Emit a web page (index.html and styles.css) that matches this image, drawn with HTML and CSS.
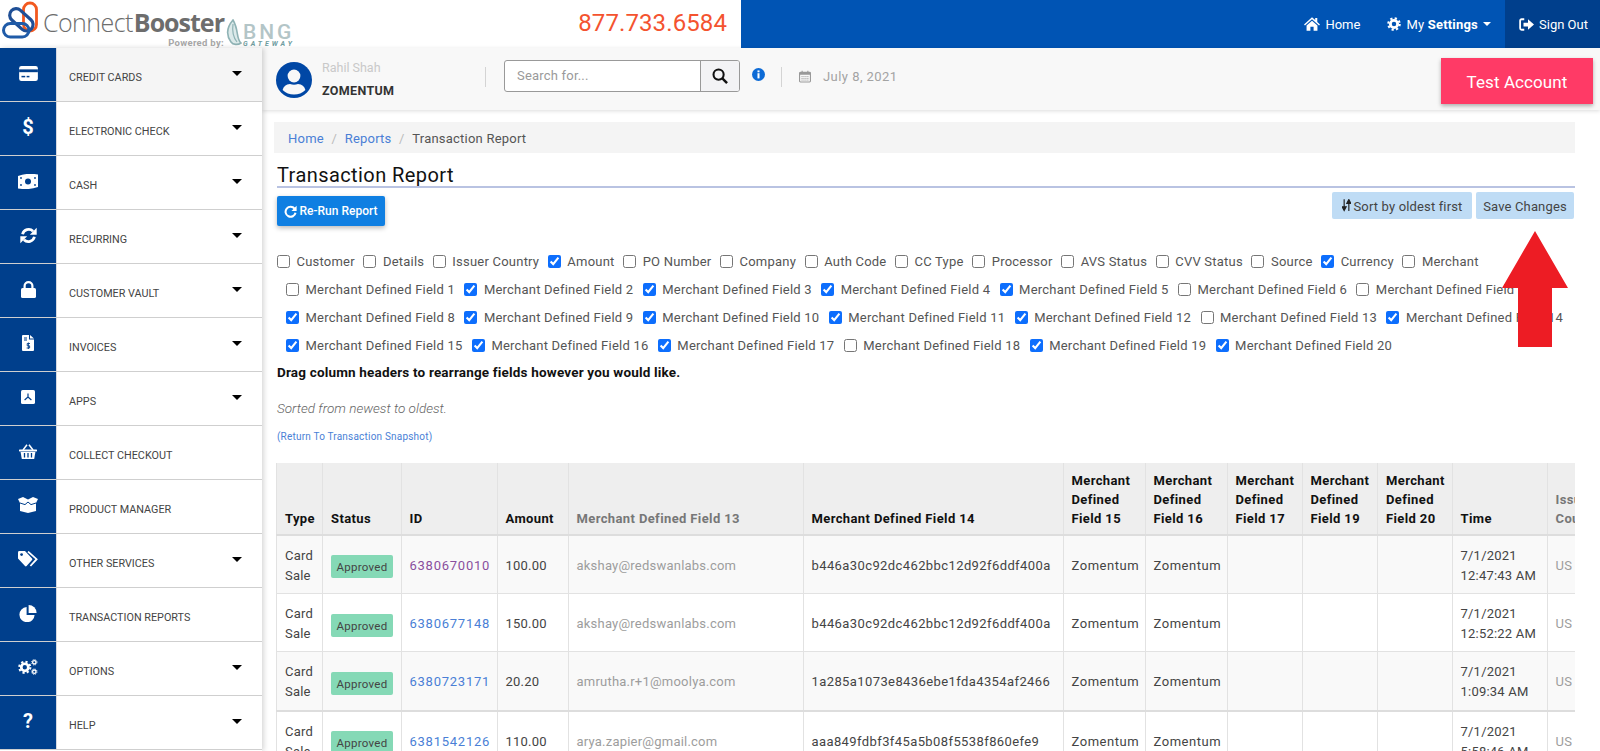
FILE: index.html
```html
<!DOCTYPE html>
<html lang="en">
<head>
<meta charset="utf-8">
<title>Transaction Report</title>
<link rel="stylesheet" href="styles.css">
</head>
<body>
<svg class="defs" width="0" height="0">
  <defs>
    <g id="gear">
      <circle cx="10" cy="10" r="5.2" fill="none" stroke="currentColor" stroke-width="4"/>
      <circle cx="10" cy="10" r="8.2" fill="none" stroke="currentColor" stroke-width="3" stroke-dasharray="3.2 3.24"/>
    </g>
  </defs>
</svg>
<header class="topbar">
  <div class="top-left">
    <div class="brand">
      <svg class="brand-mark" viewBox="0 0 40 40" width="40" height="40">
        <rect x="22.5" y="2" width="13" height="28" rx="6.5" fill="none" stroke="#f2591f" stroke-width="2.8"/>
        <rect x="7" y="12" width="27" height="13" rx="6.5" fill="none" stroke="#1f4f96" stroke-width="3.2" transform="rotate(42 20 18.5)"/>
        <rect x="2.5" y="22.5" width="25.5" height="13.5" rx="6.7" fill="none" stroke="#1f5ba8" stroke-width="3"/>
      </svg>
      <div class="brand-text">
        <div class="brand-name">Connect<b>Booster</b></div>
        <div class="brand-powered">Powered by:</div>
      </div>
      <div class="bng">
        <svg class="bng-leaf" viewBox="0 0 16 28" width="16" height="28">
          <path d="M7 1 C1 8 0 16 5 23 C7 26 12 26 15 24 C10 20 13 11 7 1 Z" fill="#dceaea" stroke="#8fb3b5" stroke-width="1.6"/>
          <path d="M7 5 C6 12 7 18 11 23" fill="none" stroke="#8fb3b5" stroke-width="1.2"/>
        </svg>
        <div class="bng-text">
          <div class="bng-name">BNG</div>
          <div class="bng-sub">GATEWAY</div>
        </div>
      </div>
    </div>
    <div class="phone">877.733.6584</div>
  </div>
  <nav class="top-nav">
    <a class="top-link">
      <svg viewBox="0 0 20 17" width="16" height="14"><path fill="currentColor" d="M10 0 L14 3.6 V1 H16.6 V6 L20 9 L18.8 10.3 L10 2.6 L1.2 10.3 L0 9 Z M3.2 10.4 L10 4.4 L16.8 10.4 V17 H12 V12 H8 V17 H3.2 Z"/></svg>
      <span>Home</span>
    </a>
    <a class="top-link top-settings">
      <svg viewBox="0 0 20 20" width="14" height="14"><use href="#gear"/></svg>
      <span class="settings-text">My <b>Settings</b></span>
      <i class="mini-caret"></i>
    </a>
    <a class="top-link top-signout">
      <svg viewBox="0 0 20 17" width="15" height="13"><path fill="none" stroke="currentColor" stroke-width="2.4" d="M7 1.5 H3.5 Q1.5 1.5 1.5 3.5 V13.5 Q1.5 15.5 3.5 15.5 H7"/><path fill="currentColor" d="M12 1.5 L20 8.5 L12 15.5 V11 H6 V6 H12 Z"/></svg>
      <span>Sign Out</span>
    </a>
  </nav>
</header>

<div class="layout">
  <aside class="sidebar">
    <a class="nav-item nav-active"><span class="nav-icon"><svg viewBox="0 0 20 16" width="19" height="15"><rect width="20" height="16" rx="2.5" fill="#fff"/><rect y="3.6" width="20" height="3" fill="#003f8c"/><rect x="2.5" y="10.5" width="4" height="1.6" fill="#003f8c"/><rect x="8" y="10.5" width="3" height="1.6" fill="#003f8c"/></svg></span><span class="nav-label">Credit Cards</span><i class="nav-caret"></i></a>
    <a class="nav-item"><span class="nav-icon"><span class="nav-glyph">$</span></span><span class="nav-label">Electronic Check</span><i class="nav-caret"></i></a>
    <a class="nav-item"><span class="nav-icon"><svg viewBox="0 0 20 15" width="20" height="15"><path d="M0 2 Q10 -1.6 20 .6 V13 Q10 16.4 0 14.4 Z" fill="#fff"/><circle cx="10" cy="7.5" r="3" fill="#003f8c"/><circle cx="3" cy="4" r=".9" fill="#003f8c"/><circle cx="3" cy="11" r=".9" fill="#003f8c"/><circle cx="17" cy="4" r=".9" fill="#003f8c"/><circle cx="17" cy="11" r=".9" fill="#003f8c"/></svg></span><span class="nav-label">Cash</span><i class="nav-caret"></i></a>
    <a class="nav-item"><span class="nav-icon"><svg viewBox="0 0 20 20" width="17" height="17"><path d="M3 8.5 A7.4 7.4 0 0 1 15.4 5" fill="none" stroke="#fff" stroke-width="3.2"/><path d="M19.6 1 V9 H11.6 Z" fill="#fff"/><path d="M17 11.5 A7.4 7.4 0 0 1 4.6 15" fill="none" stroke="#fff" stroke-width="3.2"/><path d="M.4 19 V11 H8.4 Z" fill="#fff"/></svg></span><span class="nav-label">Recurring</span><i class="nav-caret"></i></a>
    <a class="nav-item"><span class="nav-icon"><svg viewBox="0 0 15 17" width="15" height="17"><path d="M3.6 8 V5 A3.9 3.9 0 0 1 11.4 5 V8" fill="none" stroke="#fff" stroke-width="2.2"/><rect y="7" width="15" height="10" rx="1.6" fill="#fff"/></svg></span><span class="nav-label">Customer Vault</span><i class="nav-caret"></i></a>
    <a class="nav-item"><span class="nav-icon"><svg viewBox="0 0 12 16" width="12" height="16"><path d="M0 1 Q0 0 1 0 H7 V4.5 H12 V15 Q12 16 11 16 H1 Q0 16 0 15 Z M8 0 L12 3.6 H8 Z" fill="#fff"/><path d="M2 3 H5 M2 5 H5" stroke="#003f8c"/><path d="M8 8.5 H5.2 V10.8 H7.6 V13 H4.6 M6.4 7.5 V14" fill="none" stroke="#003f8c" stroke-width=".9"/></svg></span><span class="nav-label">Invoices</span><i class="nav-caret"></i></a>
    <a class="nav-item"><span class="nav-icon"><svg viewBox="0 0 14 14" width="14" height="14"><rect width="14" height="14" rx="1.6" fill="#fff"/><path d="M7 3.5 L7 7 L3.6 10 M7 7 L10.4 10" fill="none" stroke="#003f8c" stroke-width="1.2"/></svg></span><span class="nav-label">Apps</span><i class="nav-caret"></i></a>
    <a class="nav-item"><span class="nav-icon"><svg viewBox="0 0 18 15" width="18" height="15"><path d="M4 6 L8 .8 M14 6 L10 .8" stroke="#fff" stroke-width="1.5" fill="none"/><rect y="5.4" width="18" height="2" rx=".6" fill="#fff"/><path d="M1.6 8 H16.4 L15.2 15 H2.8 Z" fill="#fff"/><path d="M5.5 9 V13.5 M9 9 V13.5 M12.5 9 V13.5" stroke="#003f8c" stroke-width="1.3"/></svg></span><span class="nav-label">Collect Checkout</span></a>
    <a class="nav-item"><span class="nav-icon"><svg viewBox="0 0 20 16" width="20" height="16"><path d="M0 2 L5 0 L10 2.6 L15 0 L20 2 L18 6 V14 L10 16 L2 14 V6 Z" fill="#fff"/><path d="M2 6 L7 7.6 L10 5 L13 7.6 L18 6" fill="none" stroke="#003f8c" stroke-width="1"/></svg></span><span class="nav-label">Product Manager</span></a>
    <a class="nav-item"><span class="nav-icon"><svg viewBox="0 0 20 16" width="20" height="16"><path d="M0 1.4 Q0 0 1.4 0 H7 L14 7.4 Q14.8 8.2 14 9 L8.6 15 Q7.8 15.8 7 15 L0 7.4 Z" fill="#fff"/><circle cx="3.6" cy="3.6" r="1.4" fill="#003f8c"/><path d="M10 .6 L18.6 8.2 L12.4 15" fill="none" stroke="#fff" stroke-width="1.8"/></svg></span><span class="nav-label">Other Services</span><i class="nav-caret"></i></a>
    <a class="nav-item"><span class="nav-icon"><svg viewBox="0 0 18 17" width="18" height="17"><path d="M7.6 2 A7.6 7.6 0 1 0 15.6 10 H7.6 Z" fill="#fff"/><path d="M9.6 0 A8 8 0 0 1 17.6 8 H9.6 Z" fill="#fff"/></svg></span><span class="nav-label">Transaction Reports</span></a>
    <a class="nav-item"><span class="nav-icon"><svg viewBox="0 0 20 16" width="20" height="16"><g transform="translate(0 1.5) scale(.68)"><use href="#gear"/></g><g transform="translate(13 0) scale(.33)"><use href="#gear"/></g><g transform="translate(13 9.4) scale(.33)"><use href="#gear"/></g></svg></span><span class="nav-label">Options</span><i class="nav-caret"></i></a>
    <a class="nav-item"><span class="nav-icon"><span class="nav-glyph">?</span></span><span class="nav-label">Help</span><i class="nav-caret"></i></a>
  </aside>

  <main class="content">
    <section class="subheader">
      <svg class="avatar" viewBox="0 0 36 36" width="36" height="36"><circle cx="18" cy="18" r="18" fill="#0047a5"/><circle cx="18" cy="14" r="6.4" fill="#f8f8f8"/><path d="M6.6 28 Q8 22.6 14 22 Q18 23.4 22 22 Q28 22.6 29.4 28 Q24.6 32.6 18 32.6 Q11.4 32.6 6.6 28 Z" fill="#f8f8f8"/></svg>
      <div class="user">
        <div class="user-name">Rahil Shah</div>
        <div class="user-org">ZOMENTUM</div>
      </div>
      <span class="vsep"></span>
      <div class="search">
        <span class="search-input">Search for...</span>
        <span class="search-btn"><svg viewBox="0 0 17 17" width="16" height="16"><circle cx="7" cy="7" r="5.4" fill="none" stroke="#111" stroke-width="2.2"/><path d="M11 11 L16 16" stroke="#111" stroke-width="2.6"/></svg></span>
      </div>
      <svg class="info" viewBox="0 0 14 14" width="13" height="13"><circle cx="7" cy="7" r="7" fill="#0d6bd6"/><rect x="5.9" y="5.6" width="2.2" height="5.6" fill="#fff"/><rect x="5.9" y="2.6" width="2.2" height="2" fill="#fff"/></svg>
      <span class="vsep vsep-date"></span>
      <svg class="cal" viewBox="0 0 13 13" width="12" height="13"><rect x=".6" y="2" width="11.8" height="10.4" rx="1" fill="none" stroke="#999" stroke-width="1.2"/><rect x=".6" y="2" width="11.8" height="2.6" fill="#999"/><path d="M3.4 .4 V2.6 M9.6 .4 V2.6" stroke="#999" stroke-width="1.2"/><path d="M2.6 6.6 H10.4 M2.6 8.6 H10.4 M2.6 10.4 H10.4" stroke="#aaa" stroke-dasharray="1.4 .7"/></svg>
      <span class="date">July 8, 2021</span>
      <div class="test-account">Test Account</div>
    </section>

    <section class="page">
      <ol class="crumbs">
        <li><a class="link">Home</a></li>
        <li class="crumb-sep">/</li>
        <li><a class="link">Reports</a></li>
        <li class="crumb-sep">/</li>
        <li>Transaction Report</li>
      </ol>
      <h1 class="title">Transaction Report</h1>
      <div class="actions">
        <button class="btn-run"><svg viewBox="0 0 14 14" width="13" height="13"><path d="M11.4 4 A5.4 5.4 0 1 0 12.4 8.4" fill="none" stroke="#fff" stroke-width="2.2"/><path d="M13.6 .8 V6.4 H8 Z" fill="#fff"/></svg>Re-Run Report</button>
        <div class="actions-right">
          <button class="btn-soft"><svg viewBox="0 0 10 14" width="9" height="13"><path d="M2.4 0 V10 M.2 8.4 L2.4 12.6 L4.6 8.4 Z M7.6 13 V3 M5.4 4.6 L7.6 .4 L9.8 4.6 Z" stroke="#222" stroke-width="1.3" fill="#222"/></svg><span>Sort by oldest first</span></button>
          <button class="btn-soft btn-save"><span>Save Changes</span></button>
        </div>
      </div>

      <div class="checks">
        <div class="check-row check-first">
          <label class="check"><input type="checkbox">Customer</label>
          <label class="check"><input type="checkbox">Details</label>
          <label class="check"><input type="checkbox">Issuer Country</label>
          <label class="check"><input type="checkbox" checked>Amount</label>
          <label class="check"><input type="checkbox">PO Number</label>
          <label class="check"><input type="checkbox">Company</label>
          <label class="check"><input type="checkbox">Auth Code</label>
          <label class="check"><input type="checkbox">CC Type</label>
          <label class="check"><input type="checkbox">Processor</label>
          <label class="check"><input type="checkbox">AVS Status</label>
          <label class="check"><input type="checkbox">CVV Status</label>
          <label class="check"><input type="checkbox">Source</label>
          <label class="check"><input type="checkbox" checked>Currency</label>
          <label class="check"><input type="checkbox">Merchant</label>
        </div>
        <div class="check-row">
          <label class="check"><input type="checkbox">Merchant Defined Field 1</label>
          <label class="check"><input type="checkbox" checked>Merchant Defined Field 2</label>
          <label class="check"><input type="checkbox" checked>Merchant Defined Field 3</label>
          <label class="check"><input type="checkbox" checked>Merchant Defined Field 4</label>
          <label class="check"><input type="checkbox" checked>Merchant Defined Field 5</label>
          <label class="check"><input type="checkbox">Merchant Defined Field 6</label>
          <label class="check"><input type="checkbox">Merchant Defined Field 7</label>
        </div>
        <div class="check-row">
          <label class="check"><input type="checkbox" checked>Merchant Defined Field 8</label>
          <label class="check"><input type="checkbox" checked>Merchant Defined Field 9</label>
          <label class="check"><input type="checkbox" checked>Merchant Defined Field 10</label>
          <label class="check"><input type="checkbox" checked>Merchant Defined Field 11</label>
          <label class="check"><input type="checkbox" checked>Merchant Defined Field 12</label>
          <label class="check"><input type="checkbox">Merchant Defined Field 13</label>
          <label class="check"><input type="checkbox" checked>Merchant Defined Field 14</label>
        </div>
        <div class="check-row">
          <label class="check"><input type="checkbox" checked>Merchant Defined Field 15</label>
          <label class="check"><input type="checkbox" checked>Merchant Defined Field 16</label>
          <label class="check"><input type="checkbox" checked>Merchant Defined Field 17</label>
          <label class="check"><input type="checkbox">Merchant Defined Field 18</label>
          <label class="check"><input type="checkbox" checked>Merchant Defined Field 19</label>
          <label class="check"><input type="checkbox" checked>Merchant Defined Field 20</label>
        </div>
      </div>

      <p class="hint">Drag column headers to rearrange fields however you would like.</p>
      <p class="sorted">Sorted from newest to oldest.</p>
      <p class="back"><a class="link">(Return To Transaction Snapshot)</a></p>

      <div class="table-wrap">
        <table class="report">
          <colgroup>
            <col class="c-type"><col class="c-status"><col class="c-id"><col class="c-amount"><col class="c-f13"><col class="c-f14"><col class="c-f15"><col class="c-f16"><col class="c-f17"><col class="c-f19"><col class="c-f20"><col class="c-time"><col class="c-country">
          </colgroup>
          <thead>
            <tr>
              <th>Type</th><th>Status</th><th>ID</th><th>Amount</th><th class="muted-head">Merchant Defined Field 13</th><th>Merchant Defined Field 14</th><th>Merchant Defined Field 15</th><th>Merchant Defined Field 16</th><th>Merchant Defined Field 17</th><th>Merchant Defined Field 19</th><th>Merchant Defined Field 20</th><th>Time</th><th class="muted-head">Issuer Country</th>
            </tr>
          </thead>
          <tbody>
            <tr>
              <td>Card Sale</td><td><span class="badge">Approved</span></td><td><a class="link visited digits">6380670010</a></td><td>100.00</td><td class="muted">akshay@redswanlabs.com</td><td class="hash">b446a30c92dc462bbc12d92f6ddf400a</td><td class="wide">Zomentum</td><td class="wide">Zomentum</td><td></td><td></td><td></td><td>7/1/2021 12:47:43 AM</td><td class="muted">US</td>
            </tr>
            <tr>
              <td>Card Sale</td><td><span class="badge">Approved</span></td><td><a class="link digits">6380677148</a></td><td>150.00</td><td class="muted">akshay@redswanlabs.com</td><td class="hash">b446a30c92dc462bbc12d92f6ddf400a</td><td class="wide">Zomentum</td><td class="wide">Zomentum</td><td></td><td></td><td></td><td>7/1/2021 12:52:22 AM</td><td class="muted">US</td>
            </tr>
            <tr>
              <td>Card Sale</td><td><span class="badge">Approved</span></td><td><a class="link digits">6380723171</a></td><td>20.20</td><td class="muted">amrutha.r+1@moolya.com</td><td class="hash">1a285a1073e8436ebe1fda4354af2466</td><td class="wide">Zomentum</td><td class="wide">Zomentum</td><td></td><td></td><td></td><td>7/1/2021 1:09:34 AM</td><td class="muted">US</td>
            </tr>
            <tr>
              <td>Card Sale</td><td><span class="badge">Approved</span></td><td><a class="link digits">6381542126</a></td><td>110.00</td><td class="muted">arya.zapier@gmail.com</td><td class="hash">aaa849fdbf3f45a5b08f5538f860efe9</td><td class="wide">Zomentum</td><td class="wide">Zomentum</td><td></td><td></td><td></td><td>7/1/2021 5:58:46 AM</td><td class="muted">US</td>
            </tr>
          </tbody>
        </table>
      </div>
    </section>
  </main>
</div>

<svg class="red-arrow" viewBox="0 0 66 116" width="66" height="116"><path d="M33 0 L66 57 H50 V116 H16 V57 H0 Z" fill="#ed1c24"/></svg>
</body>
</html>
```
FILE: styles.css
```css
* { box-sizing: border-box; }
html, body { margin: 0; height: 751px; overflow: hidden; }
body {
  position: relative;
  font-family: Roboto, "Liberation Sans", sans-serif;
  font-size: 13px;
  color: #444;
  background: #fff;
}
.defs { position: absolute; }
p { margin: 0; }
a { text-decoration: none; }
.link { color: #4a7fd6; }
.visited { color: #8a4f9e; }

/* top bar */
.topbar { display: flex; height: 48px; }
.top-left { width: 741px; display: flex; align-items: flex-start; justify-content: space-between; padding-right: 14px; background: #fff; }
.brand { display: flex; align-items: flex-start; padding: 1px 0 0 1px; }
.brand-mark { flex: none; }
.brand-text { margin-left: 2px; width: 181px; }
.brand-name { font-family: "Open Sans", sans-serif; font-size: 25px; font-weight: 300; line-height: 33px; color: #6d6d6d; letter-spacing: -.55px; margin-top: 5px; white-space: nowrap; }
.brand-name b { font-weight: 700; letter-spacing: -1px; margin-left: 1px; }
.brand-powered { font-size: 9.5px; font-weight: 700; color: #a8a8a8; text-align: right; line-height: 8px; letter-spacing: .3px; margin-top: 0; }
.bng { display: flex; align-items: flex-start; margin-left: 2px; margin-top: 18px; }
.bng-leaf { flex: none; }
.bng-text { margin-left: 1px; }
.bng-name { font-size: 21px; font-weight: 500; color: #b3c5c7; line-height: 18px; letter-spacing: 2.9px; margin-top: 4px; }
.bng-sub { font-size: 7px; font-weight: 700; font-style: italic; color: #6f9da0; line-height: 6px; letter-spacing: 3px; }
.phone { font-size: 24px; color: #f4532f; line-height: 28px; margin-top: 9px; letter-spacing: .1px; }
.top-nav { flex: 1; display: flex; justify-content: flex-end; background: #0054b4; color: #fff; font-size: 13px; }
.top-link { display: flex; align-items: center; gap: 5px; color: #fff; }
.top-settings { margin-left: 27px; margin-right: 14px; }
.settings-text { letter-spacing: .2px; }
.top-settings b { font-weight: 700; }
.mini-caret { border: 4px solid transparent; border-top-color: #fff; border-bottom: 0; margin-left: 0; }
.top-signout { width: 95px; background: #003f8c; padding-left: 14px; gap: 5px; }

/* layout */
.layout { display: flex; height: 703px; }
.sidebar { width: 262px; flex: none; background: #fff; box-shadow: 2px 0 5px rgba(0,0,0,.16); position: relative; z-index: 2; }
.nav-item { display: flex; height: 54px; border-bottom: 1px solid #cfcfcf; color: #444; }
.nav-active { background: #f5f5f5; }
.nav-icon { width: 57px; flex: none; display: flex; align-items: center; justify-content: center; background: #003f8c; border-right: 1px solid #d5d9e2; color: #fff; padding-bottom: 3px; }
.nav-glyph { font-size: 20px; font-weight: 700; line-height: 1; }
.nav-label { flex: 1; font-size: 10.8px; text-transform: uppercase; padding: 6px 0 0 12px; display: flex; align-items: center; }
.nav-caret { border: 5px solid transparent; border-top-color: #000; border-bottom: 0; align-self: center; margin: 0 20px 3px 0; }

/* sub header */
.content { flex: 1; min-width: 0; }
.subheader { height: 62px; display: flex; align-items: center; background: #f8f8f8; box-shadow: 0 1px 4px rgba(0,0,0,.14); padding: 2px 0 0 14px; position: relative; }
.avatar { flex: none; }
.user { width: 163px; margin-left: 10px; }
.user-name { color: #c9c9c9; font-size: 12.5px; line-height: 18px; margin-top: -2px; }
.user-org { color: #333; font-weight: 700; font-size: 12.5px; line-height: 18px; margin-top: 5px; letter-spacing: .35px; }
.vsep { width: 1px; height: 20px; background: #d4d4d4; margin-bottom: 7px; }
.search { display: flex; width: 236px; height: 32px; margin: 0 0 8px 18px; border: 1px solid #999; border-radius: 3px; background: #fff; }
.search-input { flex: 1; font-size: 13px; color: #9a9a9a; padding: 0 0 0 12px; line-height: 30px; letter-spacing: .2px; }
.search-btn { width: 39px; flex: none; background: #f3f3f5; border-left: 1px solid #999; display: flex; align-items: center; justify-content: center; border-radius: 0 2px 2px 0; }
.info { flex: none; margin: 0 0 12px 12px; }
.vsep-date { margin-left: 16px; }
.cal { flex: none; margin: 0 0 7px 17px; }
.date { font-size: 13px; color: #a3a3a3; margin: 0 0 7px 12px; letter-spacing: .45px; }
.test-account { margin-left: auto; margin-right: 7px; width: 152px; height: 46px; padding-top: 2px; background: #ff3a66; color: #fff; font-size: 17px; font-weight: 400; letter-spacing: .1px; display: flex; align-items: center; justify-content: center; box-shadow: 0 2px 4px rgba(0,0,0,.3); margin-top: 1px; }

/* page */
.page { padding: 12px 25px 0 12px; }
.crumbs { list-style: none; margin: 0; padding: 2px 0 0 14px; height: 31px; display: flex; align-items: center; gap: 7.6px; background: #f4f4f4; font-size: 13px; color: #555; letter-spacing: .22px; }
.crumb-sep { color: #bbb; }
.title { margin: 0 0 0 3px; height: 33px; padding-top: 9px; font-size: 20px; line-height: 26px; font-weight: 400; color: #111; letter-spacing: .42px; }
.page > .title { box-shadow: 0 2px 0 #b9c3e2; margin-left: 3px; }
.actions { display: flex; justify-content: space-between; align-items: flex-start; margin-left: 3px; height: 61px; padding-right: 1px; }
.btn-run { margin-top: 10px; width: 108px; height: 30px; display: flex; align-items: center; justify-content: center; gap: 2px; border: 0; border-radius: 2px; background: #0f7fe2; color: #fff; font: 500 12px Roboto, sans-serif; box-shadow: 0 2px 5px rgba(0,0,0,.28); }
.actions-right { display: flex; gap: 4px; margin-top: 6px; }
.btn-soft { height: 27px; display: flex; align-items: center; gap: 3px; border: 0; border-radius: 2px; background: #bfdcf5; color: #444; font: 400 13px Roboto, sans-serif; padding: 0; width: 140px; justify-content: center; letter-spacing: .15px; }
.btn-soft span { padding-top: 2px; }
.btn-save { width: 98px; }

.checks { margin-left: 3px; }
.check-row { display: flex; gap: 9.4px; height: 28px; align-items: center; padding-left: 9px; white-space: nowrap; }
.check-first { padding-left: 0; gap: 8.6px; }
.check { display: flex; align-items: center; gap: 6.5px; font-size: 13px; color: #555; letter-spacing: .22px; }
.check input { margin: 0; width: 13px; height: 13px; flex: none; accent-color: #0d6efd; }

.hint { margin: 0 0 0 3px; height: 26px; line-height: 26px; font-weight: 700; color: #111; font-size: 13.5px; letter-spacing: .18px; }
.sorted { margin: 10px 0 0 3px; height: 26px; line-height: 26px; font-style: italic; font-weight: 300; color: #666; font-size: 13.5px; }
.back { margin: 9px 0 0 3px; font-size: 10px; line-height: 14px; letter-spacing: .2px; }

.table-wrap { margin: 19px 0 0 2px; overflow: hidden; }
.report { table-layout: fixed; border-collapse: collapse; width: 1326px; font-size: 13px; }
.c-type { width: 46px; } .c-status { width: 78.5px; } .c-id { width: 96px; } .c-amount { width: 71px; }
.c-f13 { width: 235px; } .c-f14 { width: 260px; } .c-f15 { width: 82px; } .c-f16 { width: 82px; }
.c-f17 { width: 75px; } .c-f19 { width: 75.5px; } .c-f20 { width: 74.5px; } .c-time { width: 95px; } .c-country { width: 55.5px; }
.report th { background: #eee; color: #111; font-weight: 700; text-align: left; vertical-align: bottom; padding: 0 8px 6px; line-height: 19px; height: 71.5px; border: 1px solid #e2e2e2; border-bottom: 2px solid #ddd; border-top: 0; letter-spacing: .38px; }
.report td { padding: 3px 8px 0; height: 58.7px; line-height: 20px; border: 1px solid #e2e2e2; vertical-align: middle; letter-spacing: .22px; }
.report tbody tr:nth-child(odd) td { background: #f9f9f9; }
.report tbody tr:nth-child(3) td { border-bottom: 2px solid #ddd; }
.report .muted-head { color: #777; }
.report .muted { color: #9d9d9d; }
.report .hash { letter-spacing: .4px; }
.report .wide { letter-spacing: .55px; }
.digits { letter-spacing: .75px; }
.badge { display: block; width: 62px; height: 23px; margin-top: 2px; border-radius: 2px; background: #85d9b6; color: #444; font-size: 11.5px; line-height: 25px; text-align: center; letter-spacing: .25px; }

/* overlay: the annotation arrow drawn on the screenshot */
.red-arrow { position: absolute; left: 1502px; top: 231px; z-index: 5; }
```
